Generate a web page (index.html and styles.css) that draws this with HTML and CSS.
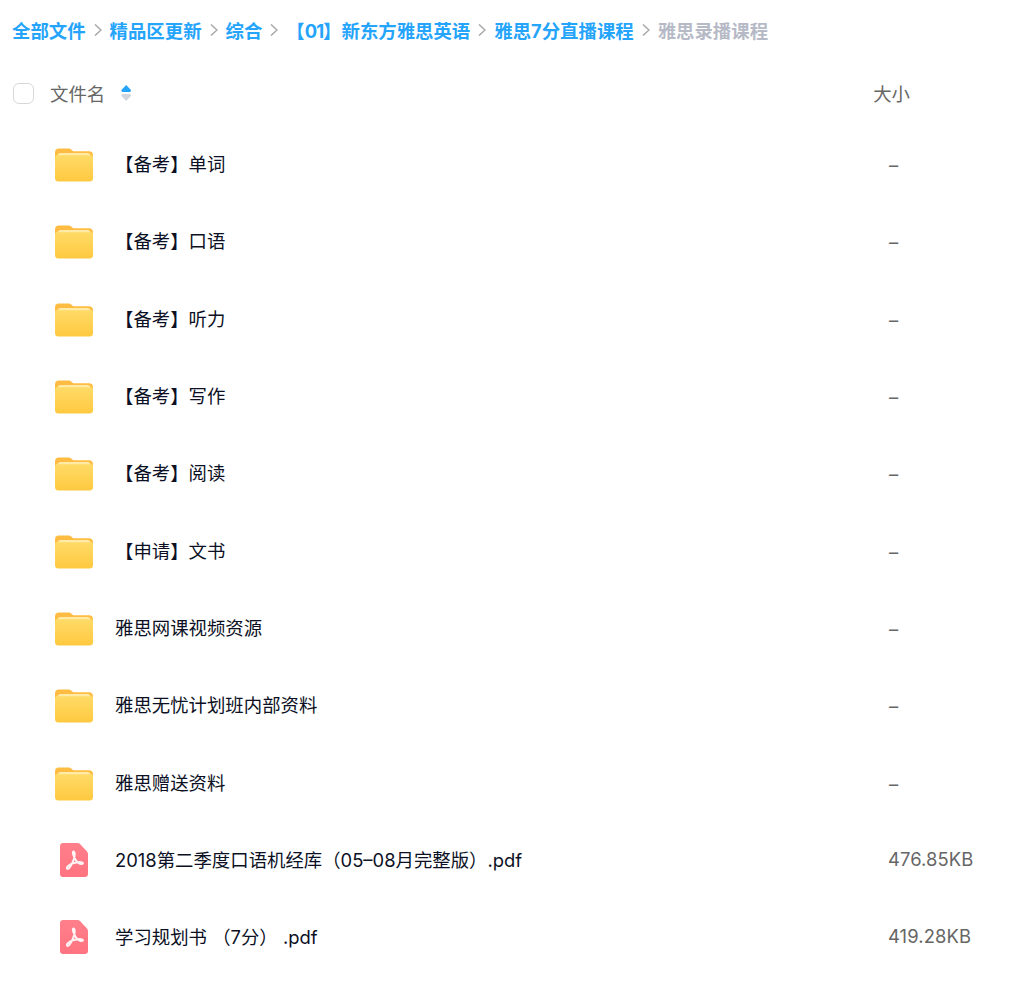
FILE: index.html
```html
<!DOCTYPE html>
<html lang="zh">
<head>
<meta charset="utf-8">
<title>雅思录播课程</title>
<link rel="stylesheet" href="styles.css">
</head>
<body>
<svg class="defs" width="0" height="0" aria-hidden="true">
  <defs>
    <linearGradient id="fg" x1="0" y1="0" x2="0" y2="1">
      <stop offset="0" stop-color="#ffdb68"/>
      <stop offset="1" stop-color="#ffc940"/>
    </linearGradient>
    <linearGradient id="pg" x1="0" y1="0" x2="0" y2="1">
      <stop offset="0" stop-color="#ff7f8b"/>
      <stop offset="1" stop-color="#ff7480"/>
    </linearGradient>
    <symbol id="folder" viewBox="0 0 38 34">
      <path d="M0 4.500C0 2 1.500.5 3.800.5h9.500c1.400 0 2.300.4 3.200 1.200l1.700 1.500h15.900c2.400 0 3.900 1.600 3.900 3.900V13H0z" fill="#ffbc42"/>
      <rect x="0" y="6.500" width="38" height="27" rx="3.500" fill="url(#fg)"/>
      <path d="M3 7.200c0-1.400.9-2.200 2.300-2.200h27.400c1.400 0 2.300.8 2.300 2.200z" fill="#ffeaa6"/>
    </symbol>
    <symbol id="pdf" viewBox="0 0 28 34">
      <path d="M3 0h14.500c1 0 1.800.4 2.500 1.100l7 7.400c.7.700 1 1.500 1 2.500V31c0 1.700-1.300 3-3 3H3c-1.700 0-3-1.300-3-3V3c0-1.700 1.300-3 3-3z" fill="url(#pg)"/>
      <path d="M13.600 8.500c-1 0-1.100 1.300.2 4.600 1 2.800 2.700 5.400 4.700 6.900 1.900 1.400 4.500 1.200 4.500.2 0-1.100-3-1.400-6.300-.8-3.700.6-7.200 2-8.800 3.700-1.300 1.500-1.300 2.900-.3 2.900 1.200 0 3-2.500 4.500-5.600 1.500-3.200 2.700-6.500 2.600-9.300-.1-1.700-.5-2.600-1.100-2.600z" fill="none" stroke="#fff" stroke-opacity=".92" stroke-width="2" stroke-linejoin="round"/>
    </symbol>
  </defs>
</svg>

<nav class="crumbs">
  <a class="crumb">全部文件</a><span class="sep"><svg viewBox="0 0 8 12" class="chev"><path d="M1 .5l6 5.500-6 5.500" /></svg></span>
  <a class="crumb">精品区更新</a><span class="sep"><svg viewBox="0 0 8 12" class="chev"><path d="M1 .5l6 5.500-6 5.500" /></svg></span>
  <a class="crumb">综合</a><span class="sep"><svg viewBox="0 0 8 12" class="chev"><path d="M1 .5l6 5.500-6 5.500" /></svg></span>
  <a class="crumb">【<span class="num">01</span>】新东方雅思英语</a><span class="sep"><svg viewBox="0 0 8 12" class="chev"><path d="M1 .5l6 5.500-6 5.500" /></svg></span>
  <a class="crumb">雅思7分直播课程</a><span class="sep"><svg viewBox="0 0 8 12" class="chev"><path d="M1 .5l6 5.500-6 5.500" /></svg></span>
  <span class="crumb current">雅思录播课程</span>
</nav>

<div class="head">
  <span class="check"></span>
  <span class="head-name">文件名</span>
  <span class="sort"><i class="up"></i><i class="down"></i></span>
  <span class="head-size">大小</span>
</div>

<ul class="list">
  <li class="row"><span class="ico"><svg class="folder"><use href="#folder"/></svg></span><span class="name">【备考】单词</span><span class="size dash">–</span></li>
  <li class="row"><span class="ico"><svg class="folder"><use href="#folder"/></svg></span><span class="name">【备考】口语</span><span class="size dash">–</span></li>
  <li class="row"><span class="ico"><svg class="folder"><use href="#folder"/></svg></span><span class="name">【备考】听力</span><span class="size dash">–</span></li>
  <li class="row"><span class="ico"><svg class="folder"><use href="#folder"/></svg></span><span class="name">【备考】写作</span><span class="size dash">–</span></li>
  <li class="row"><span class="ico"><svg class="folder"><use href="#folder"/></svg></span><span class="name">【备考】阅读</span><span class="size dash">–</span></li>
  <li class="row"><span class="ico"><svg class="folder"><use href="#folder"/></svg></span><span class="name">【申请】文书</span><span class="size dash">–</span></li>
  <li class="row"><span class="ico"><svg class="folder"><use href="#folder"/></svg></span><span class="name">雅思网课视频资源</span><span class="size dash">–</span></li>
  <li class="row"><span class="ico"><svg class="folder"><use href="#folder"/></svg></span><span class="name">雅思无忧计划班内部资料</span><span class="size dash">–</span></li>
  <li class="row"><span class="ico"><svg class="folder"><use href="#folder"/></svg></span><span class="name">雅思赠送资料</span><span class="size dash">–</span></li>
  <li class="row"><span class="ico"><svg class="pdf"><use href="#pdf"/></svg></span><span class="name">2018第二季度口语机经库（05–08月完整版）.pdf</span><span class="size">476.85KB</span></li>
  <li class="row"><span class="ico"><svg class="pdf"><use href="#pdf"/></svg></span><span class="name">学习规划书 （7分） .pdf</span><span class="size">419.28KB</span></li>
</ul>
</body>
</html>
```

FILE: styles.css
```css
* { box-sizing: border-box; }
html, body { margin: 0; padding: 0; background: #fff; }
body {
  width: 1024px;
  height: 1004px;
  overflow: hidden;
  font-family: Inter, "Liberation Sans", "Noto Sans CJK SC", sans-serif;
  font-size: 18.4px;
  color: #0b1024;
}
.defs { position: absolute; }

.crumbs {
  display: flex;
  align-items: center;
  height: 22px;
  margin: 19px 0 0 12px;
  font-weight: 700;
  color: #25a4fc;
  white-space: nowrap;
}
.crumb { display: block; }
.num { letter-spacing: -1px; }
.current { color: #b6bac6; }
.sep { display: flex; width: 24px; justify-content: center; }
.chev { width: 8px; height: 12px; fill: none; stroke: #a8a8a8; stroke-width: 1.500; }

.head {
  display: flex;
  align-items: center;
  height: 28px;
  margin-top: 38px;
  padding-left: 13px;
  color: #666;
}
.check {
  width: 21px;
  height: 21px;
  border: 1.500px solid #d8d8d8;
  border-radius: 6px;
}
.head-name { margin-left: 16px; }
.sort {
  display: flex;
  flex-direction: column;
  gap: 2px;
  margin-left: 16px;
}
.sort i { display: block; width: 10px; height: 7px; }
.up { background: #25a4fc; clip-path: polygon(50% 0, 100% 75%, 90% 100%, 10% 100%, 0 75%); }
.down { background: #d2d5dc; clip-path: polygon(10% 0, 90% 0, 100% 25%, 50% 100%, 0 25%); }
.head-size { margin-left: auto; margin-right: 114px; }

.list {
  list-style: none;
  margin: 18.500px 0 0;
  padding: 0;
}
.row {
  display: flex;
  align-items: center;
  height: 77.300px;
  padding-left: 55px;
}
.ico {
  display: flex;
  justify-content: center;
  width: 38px;
  flex: none;
}
.folder { width: 38px; height: 34px; margin-top: 2px; }
.pdf { width: 28px; height: 34px; }
.name { margin: -2px 0 0 22px; white-space: pre; }
.size {
  margin: -2px 0 0 auto;
  width: 136px;
  color: #666;
  letter-spacing: .1px;
}
.dash { margin-top: 0; padding-top: 2px; padding-left: 1px; }
```
